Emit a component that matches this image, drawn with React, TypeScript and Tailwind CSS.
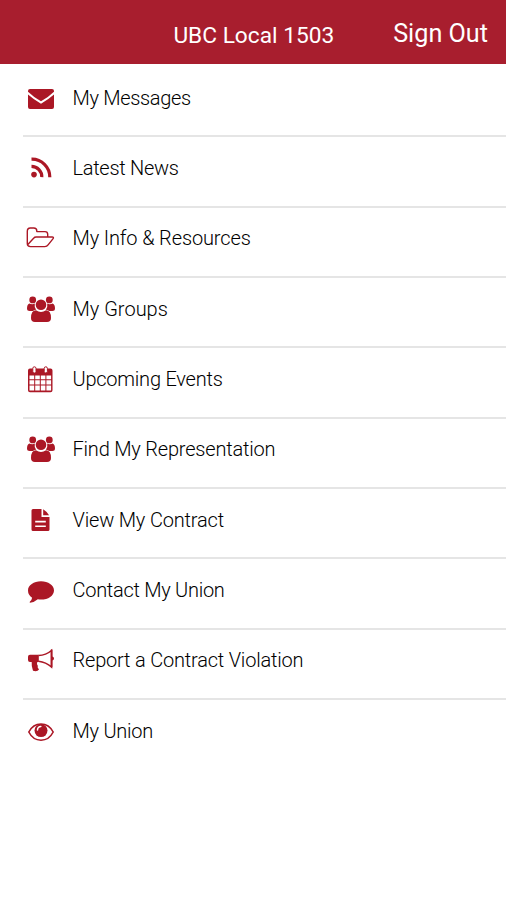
import React from "react";

const Icon = ({ children }: { children: React.ReactNode }) => (
  <svg viewBox="0 0 36 30" className="h-[30px] w-9 shrink-0" fill="currentColor" stroke="none" aria-hidden="true">
    {children}
  </svg>
);

const Envelope = () => (
  <Icon>
    <path d="M7 6h22q2 0 2 2v.7Q25 14.500 18 18.200 11 14.500 5 8.700V8q0-2 2-2Z" />
    <path d="M5 11.500q6 5.300 13 9.200 7-3.900 13-9.200V24q0 2-2 2H7q-2 0-2-2Z" />
  </Icon>
);

const Rss = () => (
  <Icon>
    <circle cx="11" cy="21.600" r="2.800" />
    <path d="M8.500 13.400a10.300 10.300 0 0 1 10.300 10.800M8.500 6.200a17.800 17.800 0 0 1 18.300 18" fill="none" stroke="currentColor" strokeWidth="3.200" />
  </Icon>
);

const Folder = () => (
  <Icon>
    <path d="M4.300 20.500V8.300q0-3.300 3-3.300h3.500q3 0 3 3v.6h8.200q2.700 0 2.700 2.700v2.700M4.600 21.800l6-6.600q1-1.200 2.500-1.200h16q2.200 0 .8 1.900l-4.800 6q-1.200 1.700-3.200 1.700H7.500q-3.200 0-3.200-3.100" fill="none" stroke="currentColor" strokeWidth="1.400" strokeLinejoin="round" />
  </Icon>
);

const Group = () => (
  <Icon>
    <circle cx="9.700" cy="5.900" r="3.400" />
    <circle cx="26.300" cy="5.900" r="3.400" />
    <circle cx="18" cy="10.800" r="5.300" />
    <path d="M6.300 9.500q3 1.300 5.500.1-.7 3.400 1.300 6.200-2 .1-3.100 1.200H6.700Q4 17 4 14.500q0-4 2.300-5ZM29.700 9.500q-3 1.300-5.500.1.700 3.400-1.300 6.200 2 .1 3.100 1.200h3.300q2.700 0 2.700-2.500 0-4-2.300-5Z" />
    <path d="M13 16.300q5 3.200 10 0 5 .2 5 7.700 0 4-4 4H12q-4 0-4-4 0-7.500 5-7.700Z" />
  </Icon>
);

const Calendar = () => (
  <Icon>
    <path fillRule="evenodd" d="M7 4.500h20.500q2 0 2 2v19.700q0 2-2 2H7q-2 0-2-2V6.500q0-2 2-2ZM6.500 11.500v3.800h4.700v-3.800Zm5.700 0v3.800h4.600v-3.800Zm5.600 0v3.800h4.600v-3.800Zm5.600 0v3.800h4.700v-3.800ZM6.500 16.300v4.300h4.700v-4.300Zm5.700 0v4.300h4.600v-4.300Zm5.600 0v4.300h4.600v-4.300Zm5.600 0v4.300h4.700v-4.300ZM6.500 21.600v4.900h4.700v-4.900Zm5.700 0v4.900h4.600v-4.900Zm5.600 0v4.900h4.600v-4.900Zm5.600 0v4.900h4.700v-4.900Z" />
    <rect x="9.800" y="2.800" width="3.200" height="6.200" rx="1.600" fill="white" stroke="currentColor" />
    <rect x="21.200" y="2.800" width="3.200" height="6.200" rx="1.600" fill="white" stroke="currentColor" />
  </Icon>
);

const Document = () => (
  <Icon>
    <path fillRule="evenodd" d="M10 4h8.500v8h8v12.500q0 1.500-1.500 1.500H10q-1.500 0-1.500-1.500v-19Q8.500 4 10 4Zm2.200 11.800v1.600h10.600v-1.600Zm0 4.700v1.600h10.600v-1.600Z" />
    <path d="M20.200 4.200q3.600 2.300 5.900 6h-5.900Z" />
  </Icon>
);

const Comment = () => (
  <Icon>
    <path d="M18 6.200c7.200 0 13 4.100 13 9.200s-5.800 9.200-13 9.200q-1.700 0-3.200-.3-3.400 3-7.800 3.400-.8-.4 0-1.200 1.800-1.500 2.100-3.800Q5 19.900 5 15.400c0-5.100 5.800-9.200 13-9.200Z" />
  </Icon>
);

const Megaphone = () => (
  <Icon>
    <path d="M7 9.800h8.800v7.300h-1.500q-1 2 .5 3.600-.8 1.500 1.200 3.800-1.700 2.600-6 1.300-1.700-4.200-1.300-8.700H7q-2 0-2-2v-3.300q0-2 2-2Z" />
    <path d="M15.500 10.500q7.500-.2 13-5v16.500q-5.500-4.800-13-5.700" fill="none" stroke="currentColor" strokeWidth="1.500" />
    <path d="M27.700 4.800q1-1 1.800.3v6.500q1.500.5 1.500 2t-1.500 2v6.300q-.8 1.400-1.800.3Z" />
  </Icon>
);

const Eye = () => (
  <Icon>
    <path d="M5.800 16Q10 8 18 8t12.200 8Q26 24.200 18 24.200T5.800 16Z" fill="none" stroke="currentColor" strokeWidth="1.600" />
    <circle cx="18" cy="14.600" r="6.500" />
    <path d="M14.500 13.900q.1-3.300 3.400-3.500" fill="none" stroke="white" strokeWidth="1.500" strokeLinecap="round" />
  </Icon>
);

const items = [
  { label: "My Messages", Glyph: Envelope, tracking: "tracking-[-0.33px]" },
  { label: "Latest News", Glyph: Rss, tracking: "tracking-[-0.28px]" },
  { label: "My Info & Resources", Glyph: Folder, tracking: "tracking-[-0.13px]" },
  { label: "My Groups", Glyph: Group, tracking: "tracking-normal" },
  { label: "Upcoming Events", Glyph: Calendar, tracking: "tracking-[-0.23px]" },
  { label: "Find My Representation", Glyph: Group, tracking: "tracking-[-0.2px]" },
  { label: "View My Contract", Glyph: Document, tracking: "tracking-[-0.18px]" },
  { label: "Contact My Union", Glyph: Comment, tracking: "tracking-[-0.28px]" },
  { label: "Report a Contract Violation", Glyph: Megaphone, tracking: "tracking-[-0.2px]" },
  { label: "My Union", Glyph: Eye, tracking: "tracking-[-0.25px]" },
];

export default function App() {
  return (
    <div className="h-[900px] w-full bg-white font-['Roboto',sans-serif]">
      <header className="flex h-16 items-start justify-end bg-[#a81e2e] pr-[18px] text-white">
        <h1 className="mr-[59px] pt-[19px] text-[22.7px] leading-[34px]">UBC Local 1503</h1>
        <button className="pt-[15px] text-[25.2px] leading-[38px]">Sign Out</button>
      </header>
      <nav>
        <ul className="pt-[3px] pl-[23px]">
          {items.map(({ label, Glyph, tracking }) => (
            <li
              key={label}
              className="flex h-[70.33px] items-start border-b-2 border-[#e5e5e5] pt-[15.6px] text-[#ab1725] last:border-b-0"
            >
              <Glyph />
              <span className={`ml-[13.5px] text-[20px] leading-[30px] font-light text-black ${tracking}`}>{label}</span>
            </li>
          ))}
        </ul>
      </nav>
    </div>
  );
}
